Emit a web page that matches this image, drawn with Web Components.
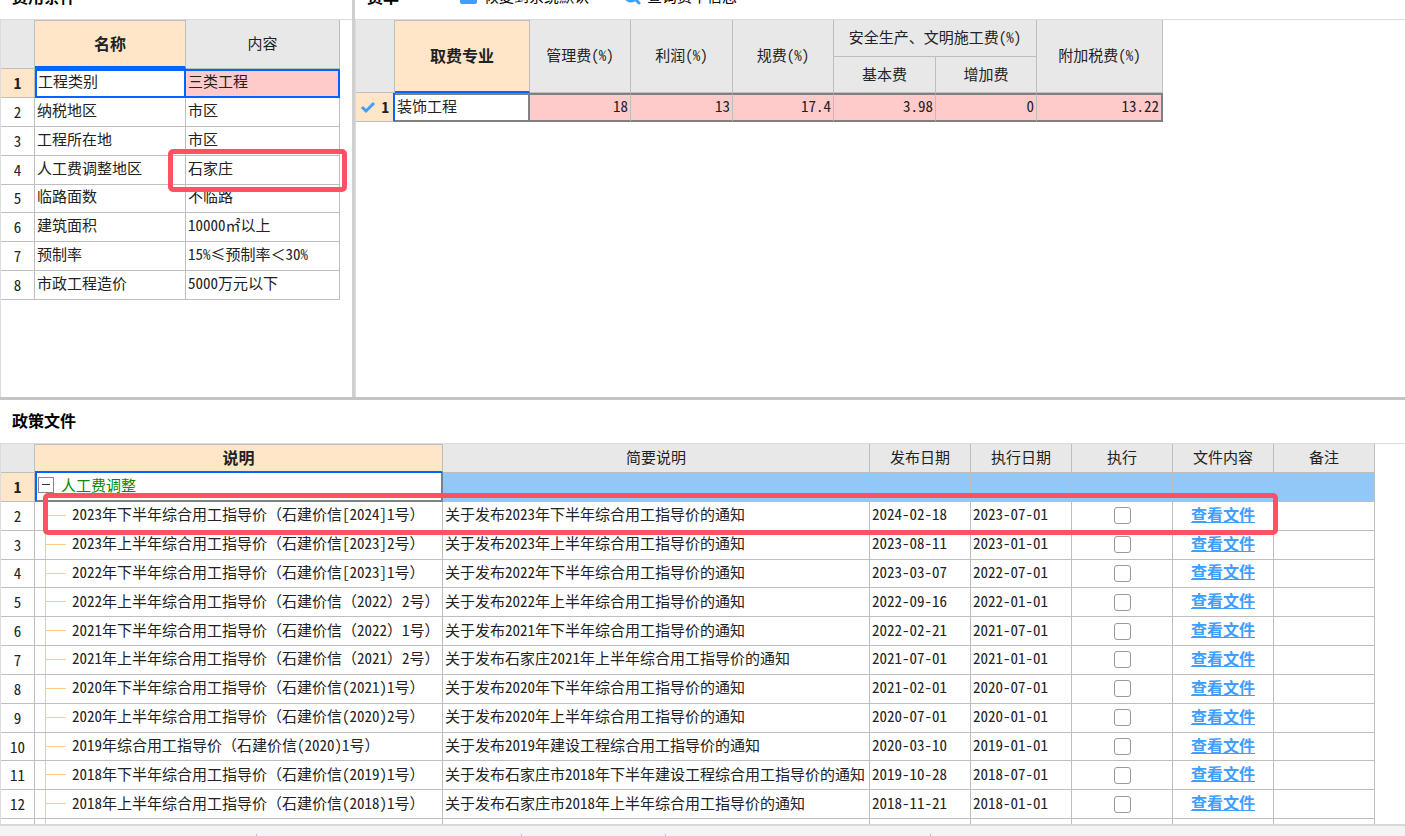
<!DOCTYPE html>
<html lang="zh-CN">
<head>
<meta charset="utf-8">
<title>费用条件</title>
<style>
    body {
        margin: 0;
        font: 15px/20px "Noto Sans Mono CJK SC", "Liberation Sans", "Noto Sans CJK SC", sans-serif;
        color: #222;
        background: #fff;
        overflow: hidden;
    }
</style>
</head>
<body>
<fee-app></fee-app>

<script>
// Styles shared by all three grids
const gridCss = `
    * {
        box-sizing: border-box;
    }

    :host {
        display: block;
        border-top: 1px solid #dcdcdc;
        border-left: 1px solid #dcdcdc;
        overflow: hidden;
    }

    table {
        table-layout: fixed;
        border-collapse: separate;
        border-spacing: 0;
    }

    th, td {
        padding: 0 2px 3px;
        border-right: 1px solid #bebebe;
        border-bottom: 1px solid #bebebe;
        font-weight: normal;
        text-align: left;
        white-space: nowrap;
    }

    thead th {
        background: #e8e8e8;
        padding-bottom: 2px;
        text-align: center;
    }

    thead th.active {
        background: #ffe6c8;
        border-top: 1px solid #bebebe;
        border-bottom: 2px solid #0066ff;
        font-size: 16px;
        font-weight: bold;
    }

    tbody th {
        padding-bottom: 0;
        text-align: center;
    }

    tbody th.active {
        background: #ffe6c8;
        font-weight: bold;
    }

    .mark {
        position: absolute;
        border: 5px solid #ff5162;
        border-radius: 5px;
        pointer-events: none;
        z-index: 1;
    }
`;

class PaneHead extends HTMLElement {
    constructor() {
        super();
        this.attachShadow({ mode: 'open' });
    }

    connectedCallback() {
        this.shadowRoot.innerHTML = `
            <style>
                :host {
                    display: flex;
                    align-items: center;
                    box-sizing: border-box;
                    height: 43px;
                    padding: 0 0 4px 12px;
                    color: #000;
                }

                h2 {
                    margin: 0;
                    font-size: 16px;
                    line-height: 20px;
                }
            </style>
            <h2>${this.getAttribute('label')}</h2>
            <slot></slot>
        `;
    }
}

class ToolButton extends HTMLElement {
    constructor() {
        super();
        this.attachShadow({ mode: 'open' });
    }

    connectedCallback() {
        const icons = {
            restore: '<rect x="0" y="1" width="17" height="16" rx="2" fill="#409eff"/><path d="M5 8h7M8 4l-4 4 4 4" fill="none" stroke="#fff" stroke-width="2"/>',
            search: '<circle cx="8" cy="8" r="6" fill="none" stroke="#409eff" stroke-width="3"/><path d="M12 12l4 4" stroke="#409eff" stroke-width="3" stroke-linecap="round"/>'
        };

        this.shadowRoot.innerHTML = `
            <style>
                :host {
                    display: block;
                }

                button {
                    display: flex;
                    align-items: center;
                    gap: 6px;
                    padding: 0;
                    border: none;
                    background: none;
                    font: inherit;
                    color: inherit;
                    cursor: pointer;
                }
            </style>
            <button type="button">
                <svg width="18" height="18" viewBox="0 0 18 18" aria-hidden="true">${icons[this.getAttribute('icon')]}</svg>
                <slot></slot>
            </button>
        `;
    }
}

class ConditionGrid extends HTMLElement {
    constructor() {
        super();
        this.attachShadow({ mode: 'open' });
    }

    connectedCallback() {
        const rows = [
            ['工程类别', '三类工程'],
            ['纳税地区', '市区'],
            ['工程所在地', '市区'],
            ['人工费调整地区', '石家庄'],
            ['临路面数', '不临路'],
            ['建筑面积', '10000㎡以上'],
            ['预制率', '15%≤预制率＜30%'],
            ['市政工程造价', '5000万元以下']
        ];

        this.shadowRoot.innerHTML = `
            <style>
                ${gridCss}

                table {
                    width: 339px;
                    height: 280px;
                }

                thead tr {
                    height: 49px;
                }

                tbody tr {
                    height: 28px;
                }

                thead th.active {
                    border-bottom-width: 3px;
                }

                .selected td {
                    border: 2px solid #0066ff;
                    padding-left: 1px;
                }

                .selected td + td {
                    border-left: none;
                    background: #ffcaca;
                    padding-left: 2px;
                }

                td {
                    position: relative;
                    padding-bottom: 4px;
                }

                .mark {
                    inset: -7px -8px -8px -18px;
                }
            </style>
            <table>
                <colgroup><col width="34"><col width="151"><col width="154"></colgroup>
                <thead><tr><th></th><th class="active">名称</th><th>内容</th></tr></thead>
                <tbody>
                    ${rows.map(([name, value], i) => `
                        <tr class="${i === 0 ? 'selected' : ''}">
                            <th class="${i === 0 ? 'active' : ''}">${i + 1}</th>
                            <td>${name}</td>
                            <td>${value}${i === 3 ? '<span class="mark"></span>' : ''}</td>
                        </tr>`).join('')}
                </tbody>
            </table>
        `;
    }
}

class RateGrid extends HTMLElement {
    constructor() {
        super();
        this.attachShadow({ mode: 'open' });
    }

    connectedCallback() {
        const values = ['18', '13', '17.4', '3.98', '0', '13.22'];

        this.shadowRoot.innerHTML = `
            <style>
                ${gridCss}

                table {
                    width: 807px;
                }

                thead tr {
                    height: 36px;
                }

                thead tr:first-child {
                    height: 37px;
                }

                tbody tr {
                    height: 29px;
                }

                tbody th {
                    padding: 0 4px;
                    border-right: 2px solid #0066ff;
                }

                .number {
                    display: flex;
                    align-items: center;
                    justify-content: space-between;
                }

                td {
                    border-top: 2px solid #808080;
                    border-bottom: 2px solid #808080;
                    background: #ffcaca;
                    text-align: right;
                }

                td:nth-child(2) {
                    background: #fff;
                    border-right: 2px solid #808080;
                    text-align: left;
                }

                td:last-child {
                    border-right: 2px solid #808080;
                }
            </style>
            <table>
                <colgroup>
                    <col width="39"><col width="135"><col width="101"><col width="102">
                    <col width="101"><col width="102"><col width="101"><col width="126">
                </colgroup>
                <thead>
                    <tr>
                        <th rowspan="2"></th>
                        <th rowspan="2" class="active">取费专业</th>
                        <th rowspan="2">管理费(%)</th>
                        <th rowspan="2">利润(%)</th>
                        <th rowspan="2">规费(%)</th>
                        <th colspan="2">安全生产、文明施工费(%)</th>
                        <th rowspan="2">附加税费(%)</th>
                    </tr>
                    <tr><th>基本费</th><th>增加费</th></tr>
                </thead>
                <tbody>
                    <tr>
                        <th class="active"><span class="number">
                            <svg width="16" height="14" viewBox="0 0 16 14" aria-hidden="true">
                                <path d="M2 7l4 4 8-8" fill="none" stroke="#409eff" stroke-width="3"/>
                            </svg>1</span></th>
                        <td>装饰工程</td>
                        ${values.map(v => `<td>${v}</td>`).join('')}
                    </tr>
                </tbody>
            </table>
        `;
    }
}

class PolicyGrid extends HTMLElement {
    constructor() {
        super();
        this.attachShadow({ mode: 'open' });
    }

    connectedCallback() {
        const rows = [
            ['2023年下半年综合用工指导价（石建价信[2024]1号）', '关于发布2023年下半年综合用工指导价的通知', '2024-02-18', '2023-07-01'],
            ['2023年上半年综合用工指导价（石建价信[2023]2号）', '关于发布2023年上半年综合用工指导价的通知', '2023-08-11', '2023-01-01'],
            ['2022年下半年综合用工指导价（石建价信[2023]1号）', '关于发布2022年下半年综合用工指导价的通知', '2023-03-07', '2022-07-01'],
            ['2022年上半年综合用工指导价（石建价信（2022）2号）', '关于发布2022年上半年综合用工指导价的通知', '2022-09-16', '2022-01-01'],
            ['2021年下半年综合用工指导价（石建价信（2022）1号）', '关于发布2021年下半年综合用工指导价的通知', '2022-02-21', '2021-07-01'],
            ['2021年上半年综合用工指导价（石建价信（2021）2号）', '关于发布石家庄2021年上半年综合用工指导价的通知', '2021-07-01', '2021-01-01'],
            ['2020年下半年综合用工指导价（石建价信(2021)1号）', '关于发布2020年下半年综合用工指导价的通知', '2021-02-01', '2020-07-01'],
            ['2020年上半年综合用工指导价（石建价信(2020)2号）', '关于发布2020年上半年综合用工指导价的通知', '2020-07-01', '2020-01-01'],
            ['2019年综合用工指导价（石建价信(2020)1号）', '关于发布2019年建设工程综合用工指导价的通知', '2020-03-10', '2019-01-01'],
            ['2018年下半年综合用工指导价（石建价信(2019)1号）', '关于发布石家庄市2018年下半年建设工程综合用工指导价的通知', '2019-10-28', '2018-07-01'],
            ['2018年上半年综合用工指导价（石建价信(2018)1号）', '关于发布石家庄市2018年上半年综合用工指导价的通知', '2018-11-21', '2018-01-01']
        ];

        this.shadowRoot.innerHTML = `
            <style>
                ${gridCss}

                table {
                    width: 1374px;
                    height: 404px;
                }

                tbody tr {
                    position: relative;
                    height: 28px;
                }

                thead tr {
                    height: 29px;
                }

                .group td {
                    background: #92c8f7;
                }

                .group td:nth-child(2) {
                    background: #fff;
                    border-left: 2px solid #0066ff;
                    border-right: 2px solid #808080;
                    border-bottom: 2px solid #808080;
                    padding-left: 1px;
                    color: #008c00;
                }

                .node {
                    display: flex;
                    align-items: center;
                    gap: 7px;
                }

                .node button {
                    display: block;
                    width: 16px;
                    height: 16px;
                    padding: 0;
                    border: 1px solid #888;
                    background: linear-gradient(#333, #333) center / 8px 1px no-repeat #fff;
                }

                /* tree connectors */
                .leaf {
                    padding-left: 37px;
                    background:
                        linear-gradient(#ffcb85, #ffcb85) 10px 0 / 1px 100% no-repeat,
                        linear-gradient(#ffcb85, #ffcb85) 11px 13px / 20px 1px no-repeat;
                }

                .leaf:empty {
                    background: linear-gradient(#ffcb85, #ffcb85) 10px 0 / 1px 100% no-repeat;
                }

                .center {
                    text-align: center;
                }

                .check {
                    padding-bottom: 0;
                }

                input {
                    appearance: none;
                    display: block;
                    width: 17px;
                    height: 17px;
                    margin: 0 auto;
                    border: 1px solid #999;
                    border-radius: 3px;
                    background: #fff;
                }

                a {
                    color: #409eff;
                    font-size: 16px;
                    font-weight: bold;
                }

                .mark {
                    inset: -9px 97px -4px 42px;
                }
            </style>
            <table>
                <colgroup>
                    <col width="34"><col width="408"><col width="427"><col width="101">
                    <col width="101"><col width="101"><col width="101"><col width="101">
                </colgroup>
                <thead>
                    <tr>
                        <th></th><th class="active">说明</th><th>简要说明</th><th>发布日期</th>
                        <th>执行日期</th><th>执行</th><th>文件内容</th><th>备注</th>
                    </tr>
                </thead>
                <tbody>
                    <tr class="group">
                        <th class="active">1</th>
                        <td><span class="node"><button type="button" aria-label="折叠"></button>人工费调整</span></td>
                        <td></td><td></td><td></td><td></td><td></td><td></td>
                    </tr>
                    ${rows.map(([title, summary, issued, effective], i) => `
                        <tr>
                            <th>${i + 2}</th>
                            <td class="leaf">${title}${i === 0 ? '<span class="mark"></span>' : ''}</td>
                            <td>${summary}</td>
                            <td>${issued}</td>
                            <td>${effective}</td>
                            <td class="check"><input type="checkbox" aria-label="执行"></td>
                            <td class="center"><a href="#">查看文件</a></td>
                            <td></td>
                        </tr>`).join('')}
                    <tr>
                        <th></th><td class="leaf"></td>
                        <td></td><td></td><td></td><td></td><td></td><td></td>
                    </tr>
                </tbody>
            </table>
        `;
    }
}

class StatusBar extends HTMLElement {
    constructor() {
        super();
        this.attachShadow({ mode: 'open' });
        this.shadowRoot.innerHTML = `
            <style>
                :host {
                    display: grid;
                    grid-template-columns: 256px 265px 144px 265px 1fr;
                    box-sizing: border-box;
                    height: 12px;
                    padding-top: 8px;
                    background: #f4f4f4;
                    border-top: 2px solid #d8d8d8;
                }

                span + span {
                    border-left: 1px solid #b4bcc4;
                }
            </style>
            <span></span><span></span><span></span><span></span><span></span>
        `;
    }
}

class FeeApp extends HTMLElement {
    constructor() {
        super();
        this.attachShadow({ mode: 'open' });
        this.shadowRoot.innerHTML = `
            <style>
                :host {
                    display: flex;
                    flex-direction: column;
                    height: 100vh;
                }

                /* upper panes are scrolled so that only the foot of their headings shows */
                .top {
                    display: flex;
                    flex: none;
                    height: 421px;
                    margin-top: -24px;
                    border-bottom: 3px solid #c4c4c4;
                }

                .pane {
                    display: flex;
                    flex-direction: column;
                }

                .left {
                    flex: none;
                    width: 352px;
                    border-right: 3px solid #cfcfcf;
                }

                .right {
                    flex: 1;
                    min-width: 0;
                }

                condition-grid, rate-grid, policy-grid {
                    flex: 1;
                    min-height: 0;
                }

                .restore {
                    margin-left: 61px;
                }

                .search {
                    margin-left: 34px;
                }
            </style>
            <div class="top">
                <section class="pane left">
                    <pane-head label="费用条件"></pane-head>
                    <condition-grid></condition-grid>
                </section>
                <section class="pane right">
                    <pane-head label="费率">
                        <tool-button class="restore" icon="restore">恢复到系统默认</tool-button>
                        <tool-button class="search" icon="search">查询费率信息</tool-button>
                    </pane-head>
                    <rate-grid></rate-grid>
                </section>
            </div>
            <pane-head label="政策文件"></pane-head>
            <policy-grid></policy-grid>
            <status-bar></status-bar>
        `;
    }
}

customElements.define('pane-head', PaneHead);
customElements.define('tool-button', ToolButton);
customElements.define('condition-grid', ConditionGrid);
customElements.define('rate-grid', RateGrid);
customElements.define('policy-grid', PolicyGrid);
customElements.define('status-bar', StatusBar);
customElements.define('fee-app', FeeApp);
</script>
</body>
</html>
